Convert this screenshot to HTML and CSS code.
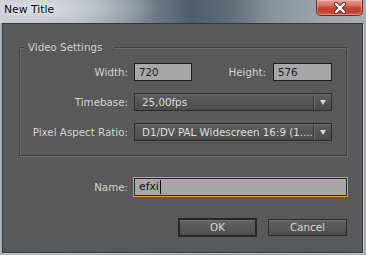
FILE: index.html
```html
<!DOCTYPE html>
<html>
<head>
<meta charset="utf-8">
<link rel="stylesheet" href="styles.css">
</head>
<body>
<div class="window">
  <div class="titlebar">
    <span class="title">New Title</span>
    <div class="close">
      <svg width="16" height="12" viewBox="0 0 16 12">
        <path d="M4 2 L12 10 M12 2 L4 10" stroke="#5a2a26" stroke-width="4.2" stroke-linecap="round"/>
        <path d="M4 2 L12 10 M12 2 L4 10" stroke="#ffffff" stroke-width="2.4" stroke-linecap="round"/>
      </svg>
    </div>
  </div>
  <div class="client">
    <div class="group">
      <span class="legend">Video Settings</span>
      <div class="grid">
        <label class="lbl">Width:</label>
        <div class="pair">
          <div class="field w58">720</div>
          <label class="lbl grow">Height:</label>
          <div class="field w59">576</div>
        </div>
        <label class="lbl">Timebase:</label>
        <div class="select"><span class="val">25,00fps</span><span class="sep"></span><span class="arrow"></span></div>
        <label class="lbl">Pixel Aspect Ratio:</label>
        <div class="select"><span class="val">D1/DV PAL Widescreen 16:9 (1....</span><span class="sep"></span><span class="arrow"></span></div>
      </div>
    </div>
    <div class="namerow">
      <label class="lbl namelbl">Name:</label>
      <div class="namefield"><span class="nametext">efxi</span><span class="caret"></span></div>
    </div>
    <div class="buttons">
      <div class="btn default">OK</div>
      <div class="btn">Cancel</div>
    </div>
  </div>
</div>
</body>
</html>
```
FILE: styles.css
```css
html, body {
  margin: 0;
  padding: 0;
  width: 366px;
  height: 255px;
  overflow: hidden;
}
body {
  font-family: "DejaVu Sans", "Liberation Sans", sans-serif;
  font-size: 10.3px;
}
.window {
  width: 366px;
  height: 255px;
  display: flex;
  flex-direction: column;
  background: linear-gradient(90deg, #aab1b7 0%, #8f99a3 40%, #7f8b96 60%, #a2a9b0 100%);
}
.titlebar {
  height: 23px;
  display: flex;
  align-items: flex-start;
  background:
    radial-gradient(ellipse 120px 30px at 40px 8px, rgba(220,224,228,0.9), rgba(220,224,228,0) 100%),
    linear-gradient(90deg, #b9bec3 0%, #a9b0b7 20%, #7b8793 38%, #4f5d6b 52%, #5d6a77 62%, #8a949e 75%, #9ea5ac 88%, #a7adb3 100%);
}
.title {
  padding-left: 4px;
  line-height: 20px;
  font-family: "DejaVu Sans", sans-serif;
  font-size: 10.8px;
  color: #000;
  text-shadow: 0 0 6px rgba(255,255,255,0.8), 0 0 3px rgba(255,255,255,0.6);
}
.close {
  margin-left: auto;
  margin-right: 3px;
  width: 45px;
  height: 15px;
  border: 1px solid #6e2a22;
  border-top: none;
  border-radius: 0 0 5px 5px;
  background: linear-gradient(180deg, #e3a497 0%, #d57466 35%, #c4402f 55%, #c2432f 80%, #d0614c 100%);
  box-shadow: inset 0 0 0 1px rgba(255,200,190,0.45);
  display: flex;
  align-items: center;
  justify-content: center;
}
.client {
  flex: 1;
  margin: 0 3px 2px 2px;
  background: #595959;
  border: 1px solid #34383c;
  box-shadow: 1px 1px 0 #c4cbd1;
  display: flex;
  flex-direction: column;
}
.group {
  position: relative;
  margin: 23px 15px 0 16px;
  height: 107px;
  border: 1px solid #3f3f3f;
  box-shadow: 1px 1px 0 #6d6d6d, inset 1px 1px 0 #6d6d6d;
}
.legend {
  position: absolute;
  top: -7px;
  left: 4px;
  padding: 0 12px 0 4px;
  background: #595959;
  color: #d3d3d3;
  line-height: 13px;
}
.grid {
  display: grid;
  grid-template-columns: 108px 198px;
  grid-auto-rows: 18px;
  column-gap: 6px;
  row-gap: 12px;
  padding-top: 15px;
}
.lbl {
  color: #d3d3d3;
  text-align: right;
  line-height: 18px;
  white-space: nowrap;
}
.pair {
  display: flex;
  align-items: stretch;
}
.grow {
  flex: 1;
  padding-right: 7px;
}
.field {
  box-sizing: border-box;
  height: 18px;
  background: #a7a7a7;
  border: 1px solid #1c1c1c;
  color: #1e1e1e;
  padding-left: 4px;
  line-height: 16px;
}
.w58 { width: 58px; }
.w59 { width: 59px; }
.select {
  box-sizing: border-box;
  height: 18px;
  border: 1px solid #2d2d2d;
  background: linear-gradient(180deg, #5e5e5e 0%, #545454 50%, #4c4c4c 100%);
  box-shadow: inset 0 1px 0 #6a6a6a;
  display: flex;
  align-items: center;
  color: #dedede;
}
.val {
  flex: 1;
  padding-left: 7px;
  line-height: 16px;
  white-space: nowrap;
  overflow: hidden;
}
.sep {
  width: 1px;
  height: 14px;
  background: #3a3a3a;
  box-shadow: 1px 0 0 #6a6a6a;
}
.arrow {
  width: 0;
  height: 0;
  margin: 0 5px 0 6px;
  border-left: 3.5px solid transparent;
  border-right: 3.5px solid transparent;
  border-top: 5px solid #d8d8d8;
}
.namerow {
  display: flex;
  align-items: center;
  margin-top: 21px;
  height: 20px;
}
.namelbl {
  width: 125px;
  line-height: 20px;
}
.namefield {
  box-sizing: border-box;
  margin-left: 5px;
  width: 215px;
  height: 20px;
  background: #a7a7a7;
  border: 1px solid #e3a21a;
  box-shadow: inset 0 0 0 1px #2a2a2a;
  display: flex;
  align-items: center;
  padding-left: 5px;
  color: #111;
}
.nametext {
  line-height: 16px;
  font-size: 10.8px;
}
.caret {
  width: 1px;
  height: 14px;
  background: #111;
  margin-left: 1px;
}
.buttons {
  display: flex;
  justify-content: flex-end;
  align-items: center;
  margin-top: 21px;
  padding-right: 15px;
  gap: 11px;
}
.btn {
  box-sizing: border-box;
  width: 79px;
  height: 17px;
  border: 1px solid #2c2c2c;
  background: linear-gradient(180deg, #646464 0%, #585858 50%, #4e4e4e 100%);
  box-shadow: inset 0 1px 0 #727272;
  color: #d6d6d6;
  text-align: center;
  line-height: 15px;
}
.default {
  height: 19px;
  border: 2px solid #262626;
  line-height: 15px;
}
```
